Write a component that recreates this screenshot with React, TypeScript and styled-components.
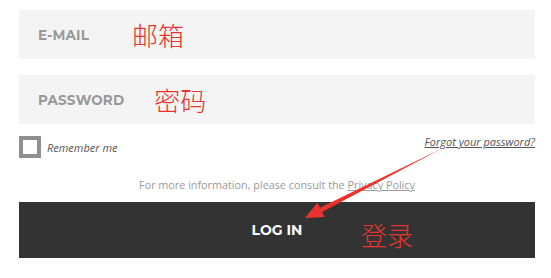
import React from "react";
import styled, { createGlobalStyle } from "styled-components";

const Global = createGlobalStyle`
  html, body { margin: 0; padding: 0; background: #ffffff; }
  body { font-family: "Open Sans", "Liberation Sans", sans-serif; }
`;

const Page = styled.div`
  position: relative;
  width: 551px;
  height: 278px;
  overflow: hidden;
  box-sizing: border-box;
  padding: 10px 16px 0 19px;
  display: flex;
  flex-direction: column;
`;

const Field = styled.div<{ $gap: number }>`
  height: 49px;
  background: #f4f4f4;
  display: flex;
  align-items: center;
  padding-left: 19px;
  gap: ${(p) => p.$gap}px;
  & + & { margin-top: 16px; }
`;

const Label = styled.span`
  font-family: "Montserrat", "Open Sans", sans-serif;
  font-weight: 700;
  font-size: 13.5px;
  letter-spacing: 0.2px;
  color: #999999;
`;

const Note = styled.span`
  font-family: "Noto Sans CJK SC", sans-serif;
  font-weight: 300;
  font-size: 26px;
  line-height: 1;
  color: #e8332f;
`;

const OptionsRow = styled.div`
  display: flex;
  justify-content: space-between;
  align-items: flex-start;
  margin-top: 12px;
`;

const CheckLabel = styled.label`
  display: flex;
  align-items: center;
  gap: 6px;
  font-style: italic;
  font-size: 11px;
  color: #555555;
`;

const Box = styled.span`
  width: 22px;
  height: 22px;
  box-sizing: border-box;
  border: 4px solid #8f8f8f;
  background: #fff;
`;

const Forgot = styled.a`
  font-style: italic;
  font-size: 11px;
  color: #555555;
  text-decoration: underline;
  margin-top: -2px;
`;

const Info = styled.p`
  margin: 19px 0 0;
  text-align: center;
  font-size: 10.8px;
  color: #9a9a9a;
  & a { color: #9a9a9a; text-decoration: underline; }
`;

const Button = styled.div`
  position: relative;
  margin-top: 10px;
  height: 56px;
  background: #333333;
  display: flex;
  align-items: center;
  justify-content: center;
  font-family: "Montserrat", "Open Sans", sans-serif;
  font-weight: 700;
  font-size: 14px;
  color: #ffffff;
`;

const ButtonNote = styled(Note)`
  position: absolute;
  left: 342px;
  top: 20px;
`;

const Arrow = styled.svg`
  position: absolute;
  left: 0;
  top: 0;
  pointer-events: none;
`;

export default function App() {
  return (
    <>
      <Global />
      <Page>
        <Field $gap={43}>
          <Label>E-MAIL</Label>
          <Note>邮箱</Note>
        </Field>
        <Field $gap={30}>
          <Label>PASSWORD</Label>
          <Note>密码</Note>
        </Field>
        <OptionsRow>
          <CheckLabel>
            <Box />
            Remember me
          </CheckLabel>
          <Forgot>Forgot your password?</Forgot>
        </OptionsRow>
        <Info>
          For more information, please consult the <a>Privacy Policy</a>
        </Info>
        <Button>
          LOG IN
          <ButtonNote>登录</ButtonNote>
        </Button>
        <Arrow width="551" height="278" viewBox="0 0 551 278">
          <polygon
            points="305,218 317.4,202.8 319.9,207.7 441,149 322.1,212.1 324.6,217"
            fill="#e8332f"
          />
        </Arrow>
      </Page>
    </>
  );
}
